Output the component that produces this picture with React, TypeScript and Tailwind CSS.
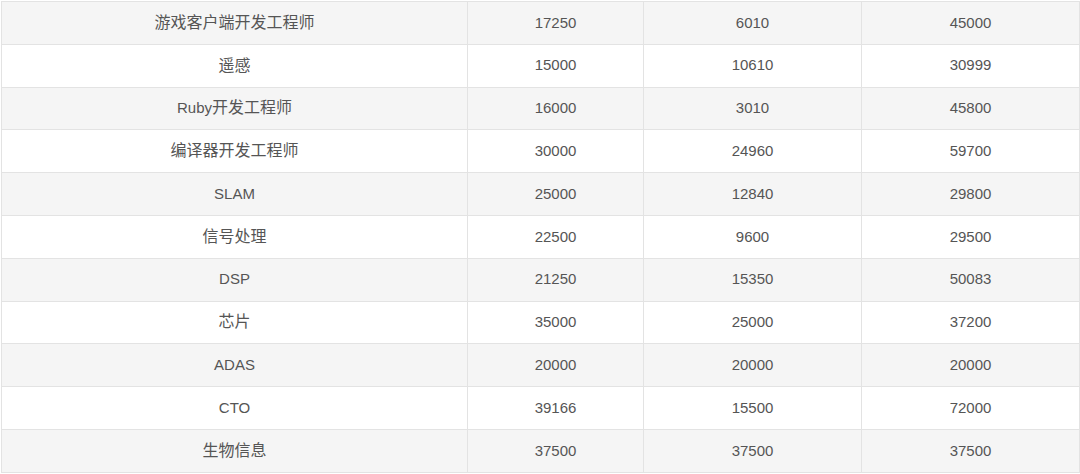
const rows: [string, number, number, number][] = [
  ['游戏客户端开发工程师', 17250, 6010, 45000],
  ['遥感', 15000, 10610, 30999],
  ['Ruby开发工程师', 16000, 3010, 45800],
  ['编译器开发工程师', 30000, 24960, 59700],
  ['SLAM', 25000, 12840, 29800],
  ['信号处理', 22500, 9600, 29500],
  ['DSP', 21250, 15350, 50083],
  ['芯片', 35000, 25000, 37200],
  ['ADAS', 20000, 20000, 20000],
  ['CTO', 39166, 15500, 72000],
  ['生物信息', 37500, 37500, 37500],
];

// CJK runs are set a touch larger than the Latin ones, as in the source page
const Label = ({ text }: { text: string }) => (
  <>
    {text.split(/([\u4e00-\u9fff]+)/).filter(Boolean).map((part, k) =>
      /[\u4e00-\u9fff]/.test(part) ? (
        <span key={k} className="text-[16px]">
          {part}
        </span>
      ) : (
        <span key={k}>{part}</span>
      ),
    )}
  </>
);

const App = () => (
  <main className="h-[474px] w-[1080px] bg-white pl-px pt-px">
    <table
      className="w-[1078px] table-fixed border-collapse text-center text-[15px] text-[#555]"
      style={{ fontFamily: '"Liberation Sans", Arial, "Noto Sans CJK SC", sans-serif' }}
    >
      <colgroup>
        <col className="w-[466px]" />
        <col className="w-[176px]" />
        <col className="w-[218px]" />
        <col className="w-[218px]" />
      </colgroup>
      <tbody>
        {rows.map(([name, a, b, c], i) => (
          <tr key={name} className={i % 2 === 0 ? 'bg-[#f5f5f5]' : 'bg-white'}>
            <td className="h-[42.8px] border border-[#e3e3e3] p-0">
              <Label text={name} />
            </td>
            {[a, b, c].map((v, j) => (
              <td key={j} className="h-[42.8px] border border-[#e3e3e3] p-0">
                {v}
              </td>
            ))}
          </tr>
        ))}
      </tbody>
    </table>
  </main>
);

export default App;
